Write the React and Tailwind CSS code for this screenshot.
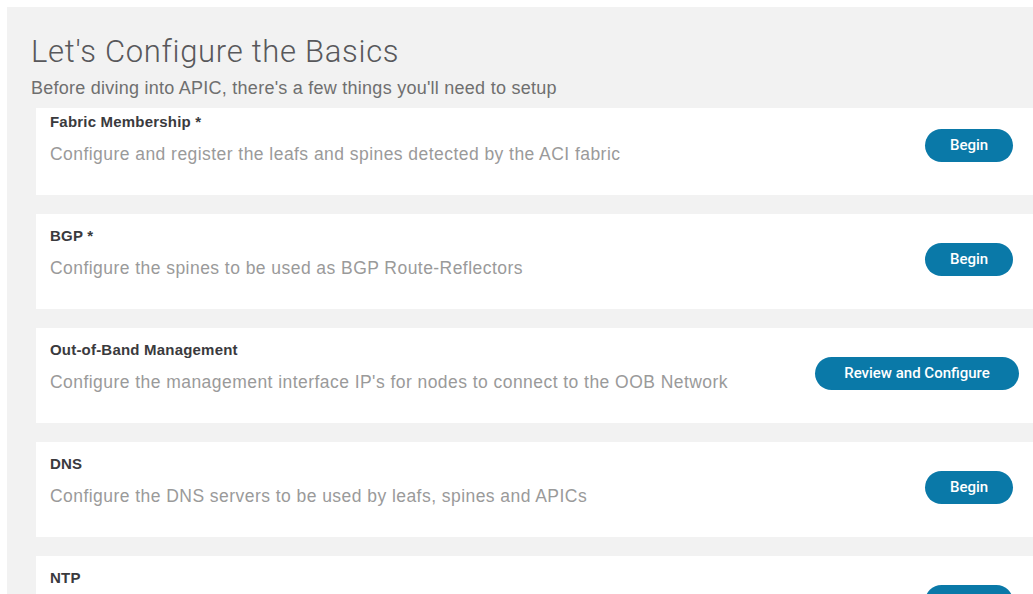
import React from 'react'

const steps = [
    { title: 'Fabric Membership *', desc: 'Configure and register the leafs and spines detected by the ACI fabric', action: 'Begin', first: true },
    { title: 'BGP *', desc: 'Configure the spines to be used as BGP Route-Reflectors', action: 'Begin' },
    { title: 'Out-of-Band Management', desc: "Configure the management interface IP's for nodes to connect to the OOB Network", action: 'Review and Configure', wide: true },
    { title: 'DNS', desc: 'Configure the DNS servers to be used by leafs, spines and APICs', action: 'Begin' },
    { title: 'NTP', desc: 'Configure the NTP servers to be used by leafs, spines and APICs', action: 'Begin' },
]

function StepCard({ title, desc, action, first, wide }) {
    return (
        <div className={`bg-white flex flex-row items-start shrink-0 ${first ? 'h-[87px] pt-0' : 'h-[95px] pt-[8px]'}`}>
            <div className="flex-1 pl-[14px]">
                <p className="text-[15px] font-bold text-[#3a3a3d] leading-[28px] tracking-[0.2px]">{title}</p>
                <p className="mt-[3px] text-[17.5px] text-[#9a9a9a] leading-[30px] tracking-[0.45px]">{desc}</p>
            </div>
            <button
                className={`mt-[21px] h-[33px] rounded-full bg-[#0a79a8] text-white text-[15px] font-medium font-['Roboto',sans-serif] ${wide ? 'w-[204px] mr-[48px]' : 'w-[88px] mr-[54px]'}`}
            >
                {action}
            </button>
        </div>
    )
}

export default function App() {
    return (
        <div className="w-[1033px] h-[594px] overflow-hidden bg-white pl-[7px] pt-[7px] font-['Liberation_Sans',Arial,sans-serif]">
            <div className="w-[1060px] h-[600px] bg-[#f2f2f2] pl-[24px]">
                <h1 className="pt-[27px] text-[31px] font-light leading-[36px] tracking-[0.7px] text-[#58585b] font-['Roboto',sans-serif]">
                    Let's Configure the Basics
                </h1>
                <p className="text-[18px] leading-[26px] tracking-[0.25px] text-[#6f6f6f] mt-[5px]">
                    Before diving into APIC, there's a few things you'll need to setup
                </p>
                <div className="flex flex-col gap-[19px] ml-[5px] mt-[7px]">
                    {steps.map((s) => (
                        <StepCard key={s.title} {...s} />
                    ))}
                </div>
            </div>
        </div>
    )
}
